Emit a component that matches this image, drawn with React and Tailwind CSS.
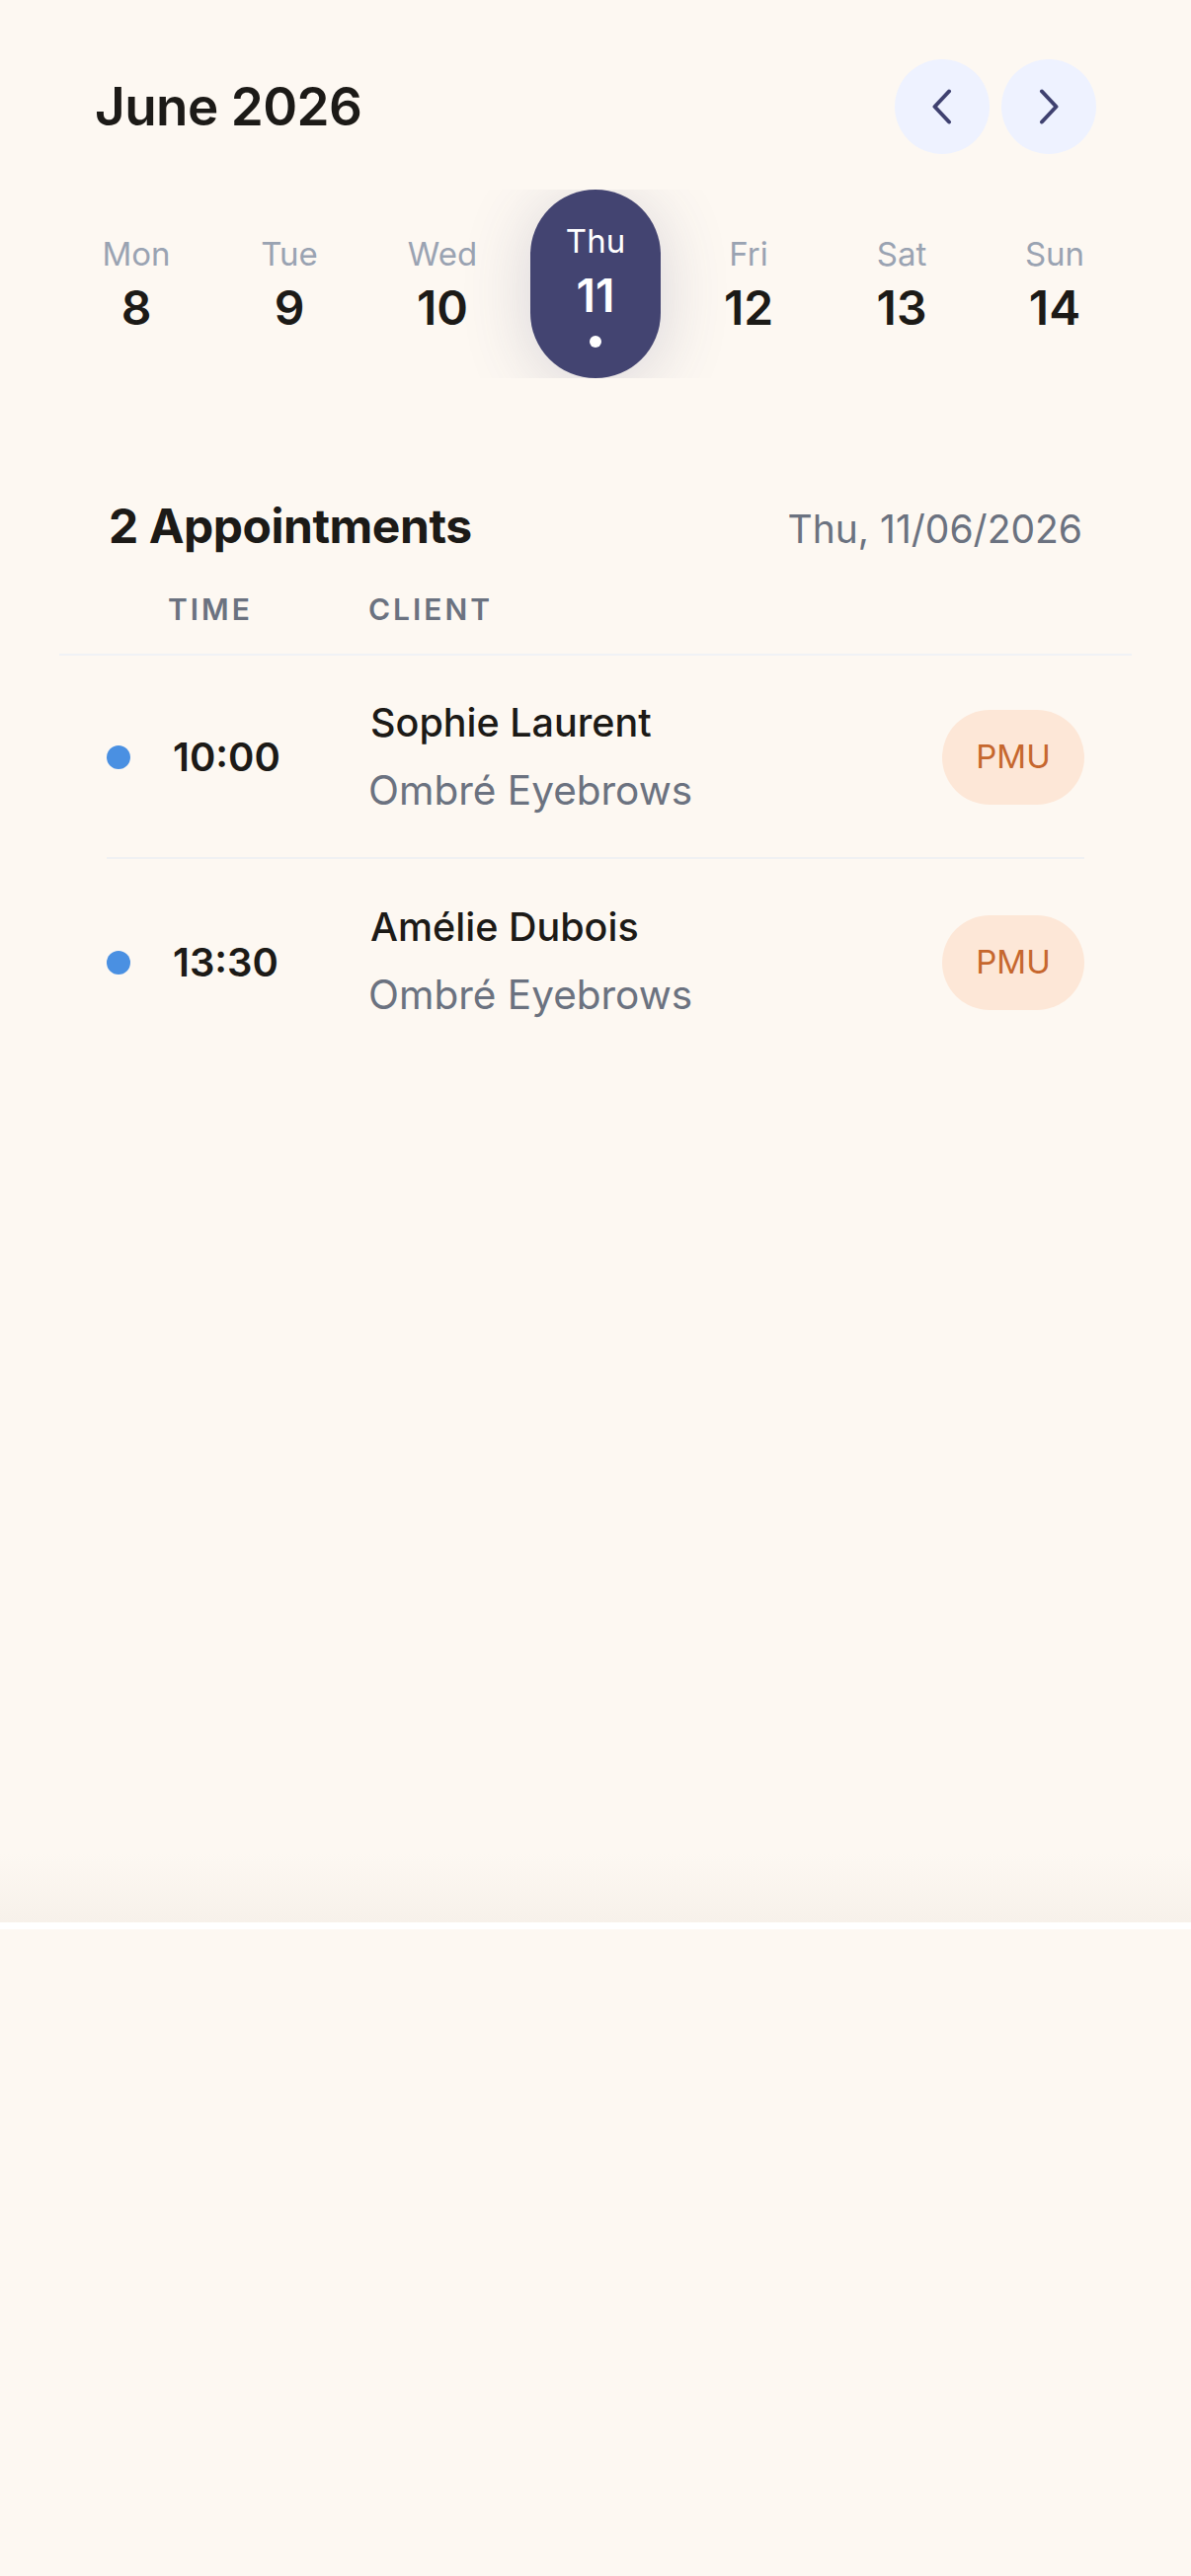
import React from "react";

const days = [
  { d: "Mon", n: 8 },
  { d: "Tue", n: 9 },
  { d: "Wed", n: 10 },
  { d: "Thu", n: 11, sel: true },
  { d: "Fri", n: 12 },
  { d: "Sat", n: 13 },
  { d: "Sun", n: 14 },
];

const appts = [
  { time: "10:00", name: "Sophie Laurent", service: "Ombré Eyebrows" },
  { time: "13:30", name: "Amélie Dubois", service: "Ombré Eyebrows" },
];

function Chevron({ dir }) {
  return (
    <svg width="20" height="36" viewBox="0 0 20 36" fill="none">
      <polyline
        points={dir === "left" ? "17,2.5 2.5,18 17,33.5" : "3,2.5 17.5,18 3,33.5"}
        stroke="#3F4170"
        strokeWidth="4"
        strokeLinecap="round"
        strokeLinejoin="round"
      />
    </svg>
  );
}

export default function App() {
  return (
    <div className="min-h-[2609px] bg-[#FDF8F2] font-['Inter','Noto_Sans',sans-serif] text-[#1C1A17]">
      <div className="h-[1947px] flex flex-col">
        {/* Header */}
        <div className="flex items-center justify-between pl-[96px] pr-[96px] pt-[60px]">
          <h1 className="text-[53px] font-semibold leading-[96px] tracking-[-0.01em]">June 2026</h1>
          <div className="flex gap-3">
            <button className="w-[96px] h-[96px] rounded-full bg-[#EEF2FF] flex items-center justify-center">
              <Chevron dir="left" />
            </button>
            <button className="w-[96px] h-[96px] rounded-full bg-[#EEF2FF] flex items-center justify-center">
              <Chevron dir="right" />
            </button>
          </div>
        </div>

        {/* Day strip */}
        <div className="mt-[36px] h-[191px] overflow-hidden flex justify-between px-[72px]">
          {days.map((day) =>
            day.sel ? (
              <div
                key={day.d}
                className="w-[132px] h-[191px] rounded-full bg-[#434471] flex flex-col items-center pt-[32px] shadow-[0_8px_70px_rgba(67,68,113,0.2)]"
              >
                <span className="text-[33px] leading-[40px] text-white">{day.d}</span>
                <span className="mt-[7px] text-[46px] leading-[56px] font-semibold text-white">{day.n}</span>
                <span className="mt-[13px] w-[12px] h-[12px] rounded-full bg-white" />
              </div>
            ) : (
              <div key={day.d} className="w-[132px] h-[191px] flex flex-col items-center pt-[45px]">
                <span className="text-[33px] leading-[40px] text-[#9AA3B2]">{day.d}</span>
                <span className="mt-[7px] text-[48px] leading-[56px] font-semibold text-[#1C1A17]">{day.n}</span>
              </div>
            )
          )}
        </div>

        {/* Appointments */}
        <div className="mt-[121px] px-[60px]">
          <div className="flex items-baseline justify-between px-[50px]">
            <h2 className="text-[48px] leading-[58px] font-bold tracking-[-0.01em]">2 Appointments</h2>
            <span className="text-[39px] leading-[48px] text-[#6B7280]">Thu, 11/06/2026</span>
          </div>
          <div className="mt-[37px] flex pl-[110px] text-[30px] leading-[36px] font-semibold tracking-[0.1em] text-[#6B7280]">
            <span className="w-[203px]">TIME</span>
            <span>CLIENT</span>
          </div>
          <div className="mt-[27px] h-[2px] bg-[#F0F2F6]" />
          <div className="px-[48px]">
            {appts.map((a, i) => (
              <div
                key={a.time}
                className={
                  i > 0
                    ? "h-[208px] pt-[3px] flex items-center border-t-2 border-[#F0F1F3]"
                    : "h-[204px] pt-[2px] flex items-center"
                }
              >
                <span className="w-[24px] h-[24px] rounded-full bg-[#4A90E2]" />
                <span className="ml-[43px] w-[200px] text-[40px] leading-[48px] font-semibold">{a.time}</span>
                <div className="flex-1 flex flex-col">
                  <span className="text-[39.5px] leading-[44px] font-medium">{a.name}</span>
                  <span className="mt-[23px] -ml-[2px] text-[40.5px] leading-[48px] text-[#6B7280]">{a.service}</span>
                </div>
                <span className="w-[144px] h-[96px] rounded-full bg-[#FDE7D7] flex items-center justify-center text-[33px] text-[#C6672E]">
                  PMU
                </span>
              </div>
            ))}
          </div>
        </div>

        <div className="flex-1" />
        <div className="h-[70px] bg-gradient-to-b from-[#FDF8F2] to-[#F7F1EA]" />
      </div>
      <div className="h-[7px] bg-white" />
      <div className="h-[655px] bg-[#FDF8F2]" />
    </div>
  );
}
